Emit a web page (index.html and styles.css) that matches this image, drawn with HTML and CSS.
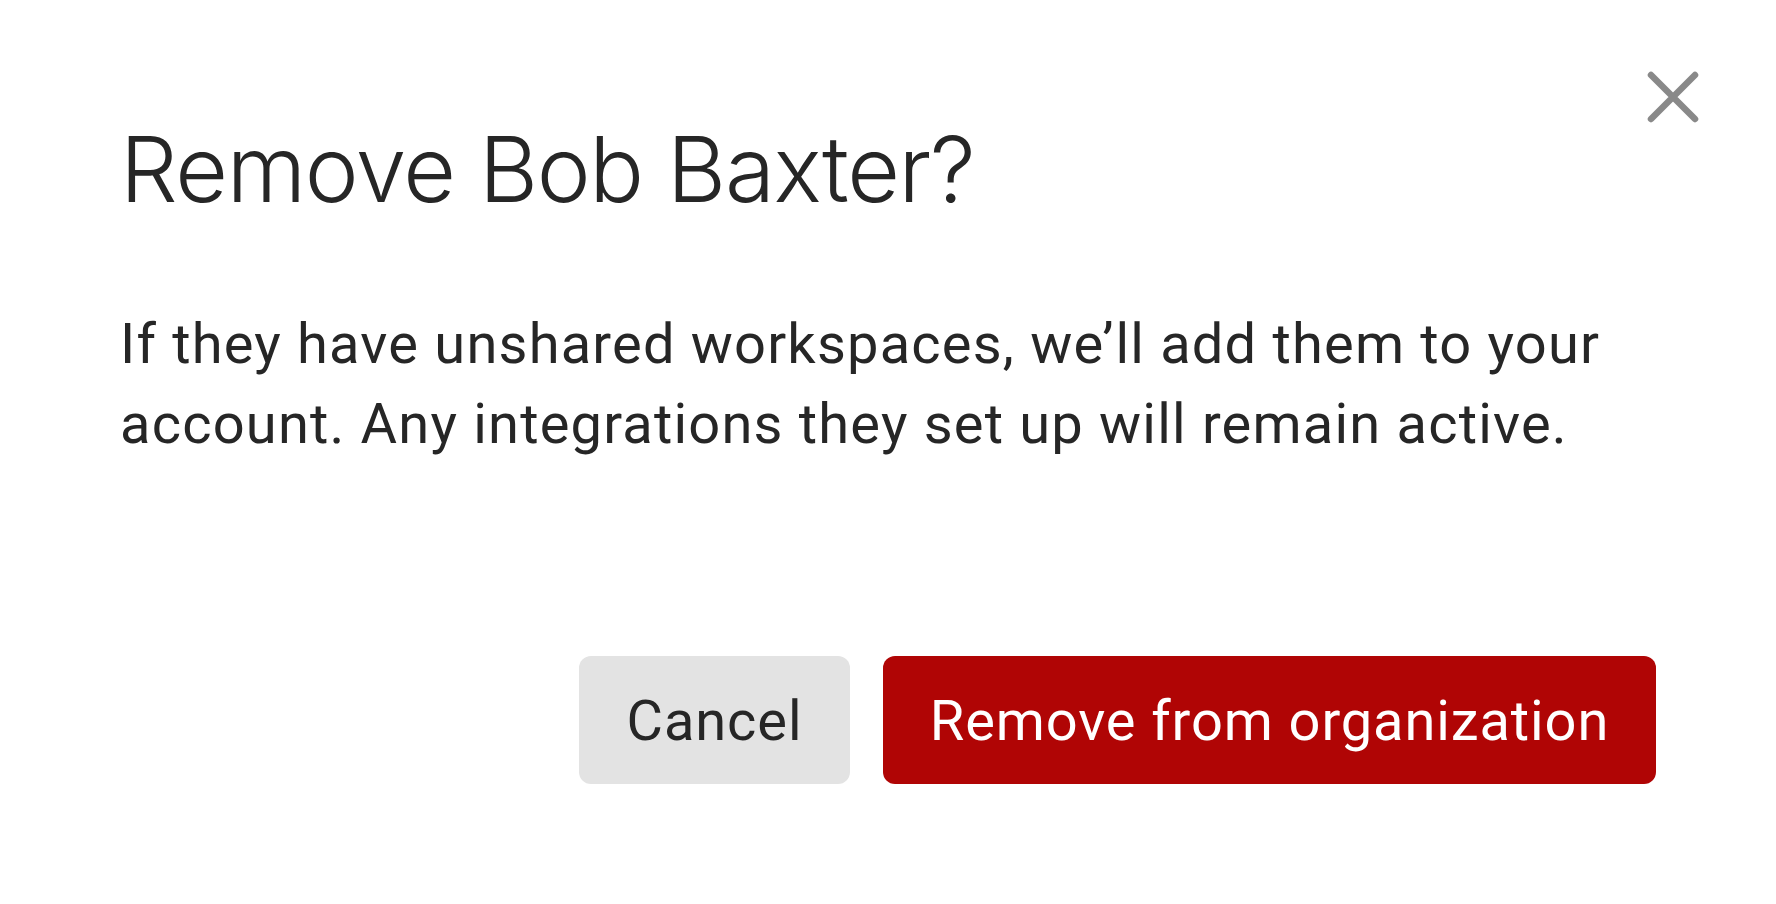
FILE: index.html
```html
<!DOCTYPE html>
<html lang="en">
<head>
<meta charset="utf-8">
<title>Remove member</title>
<link rel="stylesheet" href="styles.css">
</head>
<body>
<div class="modal">
  <button class="close" aria-label="Close">
    <svg viewBox="0 0 52 52" width="52" height="52">
      <path d="M4 4 L48 48 M48 4 L4 48" stroke="#898989" stroke-width="6.5" stroke-linecap="round" fill="none"/>
    </svg>
  </button>
  <h1 class="title">Remove Bob Baxter?</h1>
  <p class="body">If they have unshared workspaces, we’ll add them to your account. Any integrations they set up will remain active.</p>
  <div class="actions">
    <button class="btn btn-cancel">Cancel</button>
    <button class="btn btn-danger">Remove from organization</button>
  </div>
</div>
</body>
</html>
```

FILE: styles.css
```css
html, body {
  margin: 0;
  padding: 0;
  background: #ffffff;
}

.modal {
  position: relative;
  width: 1776px;
  height: 904px;
  box-sizing: border-box;
  padding: 114px 120px 0 120px;
  background: #ffffff;
  color: #262626;
}

.close {
  position: absolute;
  top: 71px;
  left: 1647px;
  width: 52px;
  height: 52px;
  padding: 0;
  border: 0;
  background: transparent;
  display: flex;
}

.title {
  margin: 0;
  font-family: Inter, "Noto Sans", sans-serif;
  font-weight: 300;
  font-size: 91px;
  line-height: 110px;
  color: #262626;
  letter-spacing: -1.3px;
}

.body {
  margin: 80px 0 0 0;
  width: 1560px;
  font-family: Roboto, "Liberation Sans", sans-serif;
  font-weight: 400;
  font-size: 56px;
  line-height: 80px;
  letter-spacing: 1.2px;
  color: #262626;
}

.actions {
  margin-top: 192px;
  display: flex;
  justify-content: flex-end;
  gap: 33px;
}

.btn {
  height: 128px;
  border: 0;
  border-radius: 12px;
  padding: 2px 0 0 0;
  font-family: Roboto, "Liberation Sans", sans-serif;
  font-size: 56px;
  font-weight: 400;
  letter-spacing: 0.9px;
  display: flex;
  align-items: center;
  justify-content: center;
  box-sizing: border-box;
}

.btn-cancel {
  width: 271px;
  background: #e3e3e3;
  color: #262626;
}

.btn-danger {
  width: 773px;
  background: #b00505;
  color: #ffffff;
}
```
